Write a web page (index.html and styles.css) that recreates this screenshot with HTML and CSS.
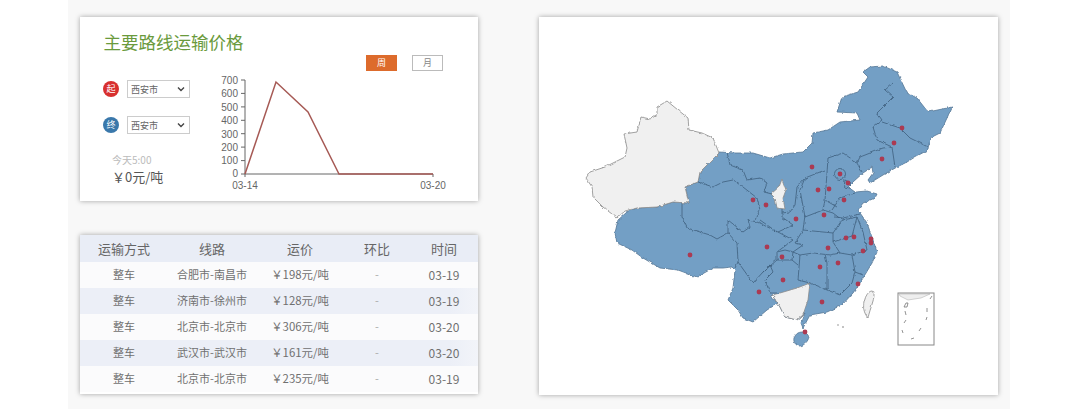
FILE: index.html
```html
<!DOCTYPE html>
<html>
<head>
    <title>主要路线运输价格</title>
    <link rel="stylesheet" href="styles.css">
</head>
<body>
    <div class="page">
        <div class="left">
            <div class="card price">
                <h1>主要路线运输价格</h1>
                <div class="tabs">
                    <span class="tab on">周</span>
                    <span class="tab">月</span>
                </div>
                <div class="price-body">
                    <div class="picker">
                        <div class="route">
                            <span class="badge start">起</span>
                            <select><option>西安市</option></select>
                        </div>
                        <div class="route">
                            <span class="badge end">终</span>
                            <select><option>西安市</option></select>
                        </div>
                        <div class="today">今天5:00</div>
                        <div class="amount">￥0元/吨</div>
                    </div>
                    <svg class="chart" viewBox="215 71 235 124" width="235" height="124">
                        <path class="axis" d="M245 80V174H433V177M241 80H245M241 93.4H245M241 106.9H245M241 120.3H245M241 133.7H245M241 147.1H245M241 160.6H245M241 174H245M245 174V177"/>
                        <polyline class="line" points="245,174 276,82 308,112 339,174 433,174"/>
                        <g class="ticks">
                            <text x="238" y="83.5">700</text>
                            <text x="238" y="97">600</text>
                            <text x="238" y="110.5">500</text>
                            <text x="238" y="124">400</text>
                            <text x="238" y="137.5">300</text>
                            <text x="238" y="150.5">200</text>
                            <text x="238" y="164">100</text>
                            <text x="238" y="177">0</text>
                        </g>
                        <text class="date" x="245" y="188.5">03-14</text>
                        <text class="date" x="433" y="188.5">03-20</text>
                    </svg>
                </div>
            </div>

            <div class="card rates">
                <div class="row head"><span>运输方式</span><span>线路</span><span>运价</span><span>环比</span><span>时间</span></div>
                <div class="row"><span>整车</span><span>合肥市-南昌市</span><span class="cost">￥198元/吨</span><span class="na">-</span><span class="day">03-19</span></div>
                <div class="row alt"><span>整车</span><span>济南市-徐州市</span><span class="cost">￥128元/吨</span><span class="na">-</span><span class="day">03-19</span></div>
                <div class="row"><span>整车</span><span>北京市-北京市</span><span class="cost">￥306元/吨</span><span class="na">-</span><span class="day">03-20</span></div>
                <div class="row alt"><span>整车</span><span>武汉市-武汉市</span><span class="cost">￥161元/吨</span><span class="na">-</span><span class="day">03-20</span></div>
                <div class="row"><span>整车</span><span>北京市-北京市</span><span class="cost">￥235元/吨</span><span class="na">-</span><span class="day">03-19</span></div>
            </div>
        </div>

        <div class="card map">
            <svg viewBox="539 17 459 378" width="459" height="378">
                <defs>
                    <filter id="rough" filterUnits="userSpaceOnUse" x="539" y="17" width="459" height="378">
                        <feTurbulence type="fractalNoise" baseFrequency="0.22" numOctaves="2" seed="4"/>
                        <feDisplacementMap in="SourceGraphic" scale="3" xChannelSelector="R" yChannelSelector="G"/>
                    </filter>
                </defs>
                <g filter="url(#rough)">
                    <!-- mainland, provinces with data -->
                    <path class="land" d="M719 152L735 153L753 153L770 158L783 154L803 152L812 143L813 133L828 130L840 122L860 120L857 113L837 112L842 97L858 92L868 77L863 72L870 67L883 66L897 72L907 93L917 98L928 112L952 107L947 118L940 133L930 138L928 150L915 157L907 162L897 167L883 175L870 183L868 180L873 173L872 167L863 173L853 182L848 187L855 192L867 191L877 194L875 198L863 203L858 210L867 223L873 240L877 252L872 263L860 283L853 293L842 305L827 312L810 315L803 328L801 323L805 313L803 315L797 320L785 317L780 307L772 295L770 297L778 303L767 310L753 322L743 318L738 310L728 300L733 288L735 270L732 267L723 268L713 268L697 277L678 270L660 268L643 258L632 250L617 243L615 233L618 220L627 212L637 208L657 207L673 202L689 203L685 187L698 182L700 172L710 162Z"/>
                    <path class="land" d="M798 333C802 331 807 332 809 337C808 341 805 345 800 346C796 346 793 342 794 338C795 336 796 334 798 333Z"/>
                    <!-- provinces without data -->
                    <path class="blank" d="M667 101L657 107L657 115L650 119L641 117L637 132L624 134L627 148L625 157L605 167L590 172L586 178L592 187L593 197L603 207L617 218L625 211L637 208L657 207L673 202L689 203L685 187L698 182L700 172L710 162L719 153L713 138L702 133L689 130L688 118L678 110Z"/>
                    <path class="blank" d="M810 283L808 300L803 315L797 320L785 317L780 307L772 295L780 293L797 288Z"/>
                    <path class="blank" d="M782 179L786 190L783 198L785 209L777 208L775 198L771 194L779 187Z"/>
                    <path class="blank" d="M872 291C875 292 874 297 873 301C871 308 869 313 868 318C864 313 862 307 865 299C866 295 869 291 872 291Z"/>
                    <!-- northeast and north -->
                    <path class="border" d="M893 83L885 90L893 97L877 113L882 120L873 127L877 140L892 147L895 167M882 122L900 128L910 138L928 147M857 163L860 157L883 148L892 147M857 163L862 172M828 158L843 153L853 160L857 163M828 158L827 173L825 200L837 207M825 170L805 178L800 190L805 217L823 210L825 200"/>
                    <circle class="border" cx="840" cy="174" r="5.5"/>
                    <path class="border" d="M845 180L851 183L850 188L844 187Z"/>
                    <!-- northwest -->
                    <path class="border" d="M698 182L713 187L723 182L733 180L743 187L757 198L760 210L755 220M727 152L730 165L743 170L747 180L760 178L767 183L764 192L772 194M682 203L682 217L687 228L710 235L717 239L728 233L728 220L743 232L750 227L748 220L757 222L778 232L793 225L782 217L782 209M760 220L777 232M805 178L797 187L795 205L790 212L782 213M728 233L737 243L738 262L735 268"/>
                    <!-- centre and south -->
                    <path class="border" d="M832 210L840 198L855 193M835 217L843 218L860 214M805 215L803 230L795 243L803 245L793 252L800 255L813 253L830 255L840 253L833 242L833 233L842 220L833 213L823 210M842 220L857 217L863 232L867 250L852 255M840 253L852 255L855 272L852 283L840 295L827 290L827 263L825 255M800 255L798 280L810 283L823 288L827 290M855 272L863 275M833 242L852 236L857 217M803 230L833 233"/>
                    <path class="border" d="M738 262L753 283L763 272L770 265L773 272L765 280L770 293M763 272L777 260L777 252L793 240L778 232M777 252L785 250L793 252L792 260L798 265M777 260L792 260M770 265L767 267M770 293L780 293"/>
                </g>
                <!-- south china sea inset -->
                <path class="inset-land" d="M899 294L930 294L921 298L908 300L900 296Z"/>
                <rect class="inset" x="898" y="293" width="36" height="52"/>
                <path class="dash" d="M906 303L904 307L907 307L908 303ZM905 311L906 315M906 320L904 323M902 330L903 333M911 339L914 338M919 331L921 328M926 320L927 317M927 308L927 312M932 296L930 299"/>
                <circle class="isle" cx="838" cy="325" r="0.7"/>
                <circle class="isle" cx="843" cy="327" r="0.8"/>
                <g class="dots">
                    <circle cx="902" cy="128" r="2.4"/><circle cx="894" cy="143" r="2.4"/><circle cx="882" cy="159" r="2.4"/>
                    <circle cx="812" cy="167" r="2.4"/><circle cx="840" cy="174" r="2.4"/><circle cx="848" cy="183" r="2.4"/>
                    <circle cx="818" cy="190" r="2.4"/><circle cx="829" cy="189" r="2.4"/><circle cx="844" cy="200" r="2.4"/>
                    <circle cx="824" cy="215" r="2.4"/><circle cx="796" cy="219" r="2.4"/><circle cx="766" cy="205" r="2.4"/>
                    <circle cx="753" cy="200" r="2.4"/><circle cx="690" cy="255" r="2.4"/><circle cx="767" cy="247" r="2.4"/>
                    <circle cx="782" cy="257" r="2.4"/><circle cx="783" cy="280" r="2.4"/><circle cx="759" cy="292" r="2.4"/>
                    <circle cx="846" cy="238" r="2.4"/><circle cx="854" cy="237" r="2.4"/><circle cx="871" cy="243" r="2.4"/>
                    <circle cx="871" cy="239" r="2.4"/><circle cx="863" cy="251" r="2.4"/><circle cx="828" cy="248" r="2.4"/>
                    <circle cx="838" cy="263" r="2.4"/><circle cx="820" cy="267" r="2.4"/><circle cx="858" cy="284" r="2.4"/>
                    <circle cx="822" cy="302" r="2.4"/><circle cx="805" cy="332" r="2.4"/>
                </g>
            </svg>
        </div>
    </div>
</body>
</html>
```

FILE: styles.css
```css
* { box-sizing: border-box; }
html, body { margin: 0; background: #fff; }
body { font-family: "Noto Sans CJK SC", "Open Sans", sans-serif; color: #555; overflow: hidden; }
.page { display: flex; gap: 61px; width: 942px; height: 409px; margin-left: 68px; padding: 17px 12px 0; background: #f8f8f8; }
.left { display: flex; flex-direction: column; gap: 34px; width: 398px; }
.card { background: #fff; box-shadow: 0 0 5px rgba(0, 0, 0, .35); }

.price { height: 184px; padding-top: 13px; }
h1 { margin: 0 0 2px 23.5px; font-size: 17.5px; line-height: 23px; font-weight: 400; color: #6a9a3c; }
.tabs { display: flex; justify-content: flex-end; gap: 15px; padding-right: 35px; }
.tab { width: 31px; height: 16px; font-size: 9px; line-height: 14px; text-align: center; color: #888; border: 1px solid #bbb; }
.tab.on { background: #dd6b2c; border-color: #dd6b2c; color: #fff; }
.price-body { display: flex; }
.picker { width: 135px; padding: 9px 0 0 23px; }
.route { display: flex; align-items: center; gap: 8px; height: 18px; margin-bottom: 18px; }
.badge { width: 16px; height: 16px; border-radius: 50%; font-size: 9px; line-height: 16px; text-align: center; color: #fff; }
.badge.start { background: #d8302f; }
.badge.end { background: #3a78ab; }
select { appearance: none; width: 63px; height: 18px; padding: 0 0 0 3px; font: 9px "Noto Sans CJK SC", sans-serif; color: #666; border: 1px solid #ccc; border-radius: 0; background: #fff url("data:image/svg+xml,%3Csvg xmlns='http://www.w3.org/2000/svg' width='8' height='6'%3E%3Cpath d='M1 1.5L4 4.5L7 1.5' fill='none' stroke='%23444' stroke-width='1.4'/%3E%3C/svg%3E") no-repeat right 4px center; }
.today { margin: 19px 0 0 9px; font-size: 10px; line-height: 14px; color: #bbb; }
.amount { margin: 1px 0 0 9px; font-size: 13px; line-height: 18px; color: #555; }
.chart { display: block; font-family: "Liberation Sans", sans-serif; }
.axis { fill: none; stroke: #666; stroke-width: 1; }
.line { fill: none; stroke: #a65a55; stroke-width: 1.5; }
.ticks text { font-size: 10px; text-anchor: end; fill: #666; }
.date { font-size: 10px; text-anchor: middle; fill: #666; }

.rates { height: 159px; }
.row { display: grid; grid-template-columns: 88px 88px 88px 66px 68px; height: 26px; padding-bottom: 2px; align-items: center; text-align: center; font-size: 11px; color: #707070; background: #fbfbfc; }
.row.head { height: 27px; padding-bottom: 0; font-size: 13px; color: #666; background: #e9edf6; }
.row.alt { background: linear-gradient(to right, #eceff7 370px, #f2f4f9 398px); }
.cost { font-size: 11.4px; }
.day { font-size: 12px; }
.na { color: #aaa; }

.map { width: 459px; height: 378px; }
.map svg { display: block; }
.land { fill: #739fc5; stroke: #557694; stroke-width: .8; stroke-linejoin: round; }
.blank { fill: #f0f0f0; stroke: #8a8a8a; stroke-width: .8; stroke-linejoin: round; }
.border { fill: none; stroke: #3f5f7e; stroke-width: .8; stroke-linejoin: round; }
.inset { fill: none; stroke: #888; stroke-width: 1; }
.inset-land { fill: #eee; stroke: #aaa; stroke-width: .5; }
.dash { fill: none; stroke: #777; stroke-width: .8; }
.isle { fill: #777; }
.dots circle { fill: #ab3a52; }
```
